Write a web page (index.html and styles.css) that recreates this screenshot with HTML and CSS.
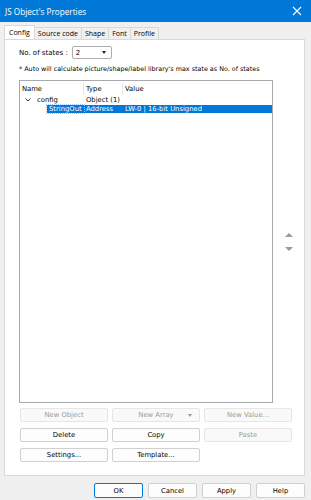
FILE: index.html
```html
<!DOCTYPE html>
<html lang="en">
  <head>
    <meta charset="UTF-8" />
    <title>JS Object's Properties</title>
    <link rel="stylesheet" href="styles.css">
  </head>
  <body>
    <div class="dialog">
      <div class="titlebar">
        <span class="title">JS Object's Properties</span>
        <svg class="close" width="10" height="10" viewBox="0 0 10 10">
          <path d="M1 1 L9 9 M9 1 L1 9" stroke="#fff" stroke-width="1.1" />
        </svg>
      </div>
      <ul class="tabs">
        <li class="active">Config</li>
        <li>Source code</li>
        <li>Shape</li>
        <li>Font</li>
        <li>Profile</li>
      </ul>
      <div class="panel">
        <div class="states">
          <label>No. of states :</label>
          <div class="select">2 <span class="caret"></span></div>
        </div>
        <p class="note">* Auto will calculate picture/shape/label library's max state as No. of states</p>
        <div class="tree-area">
          <div class="tree">
            <div class="row head">
              <span class="c1">Name</span><span class="c2">Type</span><span class="c3">Value</span>
            </div>
            <div class="row">
              <span class="c1"><svg class="chev" width="6" height="4" viewBox="0 0 6 4"><path d="M0.5 0.5 L3 3 L5.5 0.5" stroke="#333" fill="none" stroke-width="1"/></svg>config</span><span class="c2">Object (1)</span><span class="c3"></span>
            </div>
            <div class="row selected">
              <span class="c1 indent">StringOut</span><span class="c2">Address</span><span class="c3">LW-0 | 16-bit Unsigned</span>
            </div>
          </div>
          <div class="movers">
            <span class="up"></span>
            <span class="down"></span>
          </div>
        </div>
        <div class="actions">
          <button class="btn off">New Object</button>
          <button class="btn off split">New Array <span class="caret small"></span></button>
          <button class="btn off">New Value...</button>
          <button class="btn">Delete</button>
          <button class="btn">Copy</button>
          <button class="btn off">Paste</button>
          <button class="btn">Settings...</button>
          <button class="btn">Template...</button>
        </div>
      </div>
      <div class="footer">
        <button class="btn wide default">OK</button>
        <button class="btn wide">Cancel</button>
        <button class="btn wide">Apply</button>
        <button class="btn wide">Help</button>
      </div>
    </div>
  </body>
</html>
```

FILE: styles.css
```css
* {
  box-sizing: border-box;
  font-family: "DejaVu Sans", sans-serif;
}
html,
body {
  margin: 0;
  padding: 0;
}
body {
  width: 311px;
  height: 500px;
  background: #f0f0f0;
  overflow: hidden;
}
.dialog {
  display: flex;
  flex-direction: column;
  height: 500px;
}
.titlebar {
  height: 22px;
  background: #0078d7;
  color: #fff;
  display: flex;
  align-items: center;
  justify-content: space-between;
  padding: 0 9px 0 5px;
}
.title {
  font-family: "Open Sans", sans-serif;
  font-size: 8.2px;
}
/* tab strip */
.tabs {
  list-style: none;
  display: flex;
  margin: 3px 0 0 4px;
  padding: 0;
  height: 14px;
  align-items: flex-end;
}
.tabs li {
  font-family: "Open Sans", sans-serif;
  font-size: 7px;
  height: 12px;
  line-height: 12px;
  padding: 0 3px;
  border: 1px solid #d9d9d9;
  border-bottom: none;
  background: #f0f0f0;
  color: #000;
  margin-right: -1px;
}
.tabs li.active {
  background: #fff;
  height: 14px;
  line-height: 14px;
  position: relative;
  z-index: 1;
  padding: 0 4px;
}
.panel {
  background: #fff;
  margin: 0 6px 0 4px;
  border: 1px solid #d9d9d9;
  height: 437px;
  padding: 6px 0 0 14px;
  display: flex;
  flex-direction: column;
}
.states {
  display: flex;
  align-items: center;
  gap: 4px;
  font-size: 7px;
}
.select {
  width: 40px;
  height: 13px;
  border: 1px solid #adadad;
  border-radius: 2px;
  display: flex;
  align-items: center;
  justify-content: space-between;
  padding: 0 5px 0 3px;
  font-size: 7px;
}
.caret {
  width: 0;
  height: 0;
  border-left: 2.5px solid transparent;
  border-right: 2.5px solid transparent;
  border-top: 3px solid #222;
}
.caret.small {
  border-top-color: #999;
  position: absolute;
  right: 7px;
  top: 5px;
}
.note {
  font-size: 6.4px;
  margin: 6px 0 0;
  white-space: nowrap;
}
.tree-area {
  display: flex;
  margin-top: 7px;
}
.tree {
  width: 257px;
  height: 323px;
  border: 1px solid #a9a9ad;
  padding-top: 2px;
}
.row {
  display: flex;
  height: 10px;
  line-height: 10px;
  font-size: 6.8px;
}
.row .c1 {
  width: 64px;
  padding-left: 2px;
  display: flex;
  align-items: center;
  gap: 6px;
}
.row .c2 {
  width: 39px;
  padding-left: 2px;
}
.row .c3 {
  flex: 1;
  padding-left: 2px;
}
.row.head {
  height: 12px;
  line-height: 12px;
}
.row.head .c1,
.row.head .c2 {
  border-right: 1px solid #e5e5e5;
}
.chev {
  margin-left: 3px;
}
.row.selected {
  margin-left: 27px;
  height: 8px;
  line-height: 8px;
  background: #0078d7;
  color: #fff;
}
.row.selected .c1 {
  width: 37px;
  padding-left: 2px;
  outline: 1px dotted #9cc7ff;
}
.movers {
  width: 31px;
  display: flex;
  flex-direction: column;
  align-items: center;
  justify-content: center;
  gap: 10px;
}
.up,
.down {
  width: 0;
  height: 0;
  border-left: 4px solid transparent;
  border-right: 4px solid transparent;
}
.up {
  border-bottom: 4px solid #9a9a9a;
}
.down {
  border-top: 4px solid #9a9a9a;
}
.actions {
  display: grid;
  grid-template-columns: 88px 88px 88px;
  column-gap: 4px;
  row-gap: 6px;
  margin-top: 5px;
  padding-left: 1px;
}
.btn {
  height: 14px;
  font-size: 6.8px;
  background: #fdfdfd;
  border: 1px solid #d0d0d0;
  border-radius: 2px;
  color: #000;
  padding: 0;
  position: relative;
}
.btn.off {
  color: #9a9a9a;
  background: #f9f9f9;
  border-color: #e6e6e6;
}
.footer {
  display: flex;
  justify-content: flex-end;
  gap: 5px;
  padding: 7px 6px 0 0;
}
.btn.wide {
  width: 49px;
  height: 15px;
}
.btn.default {
  border: 1px solid #0078d7;
}
```
